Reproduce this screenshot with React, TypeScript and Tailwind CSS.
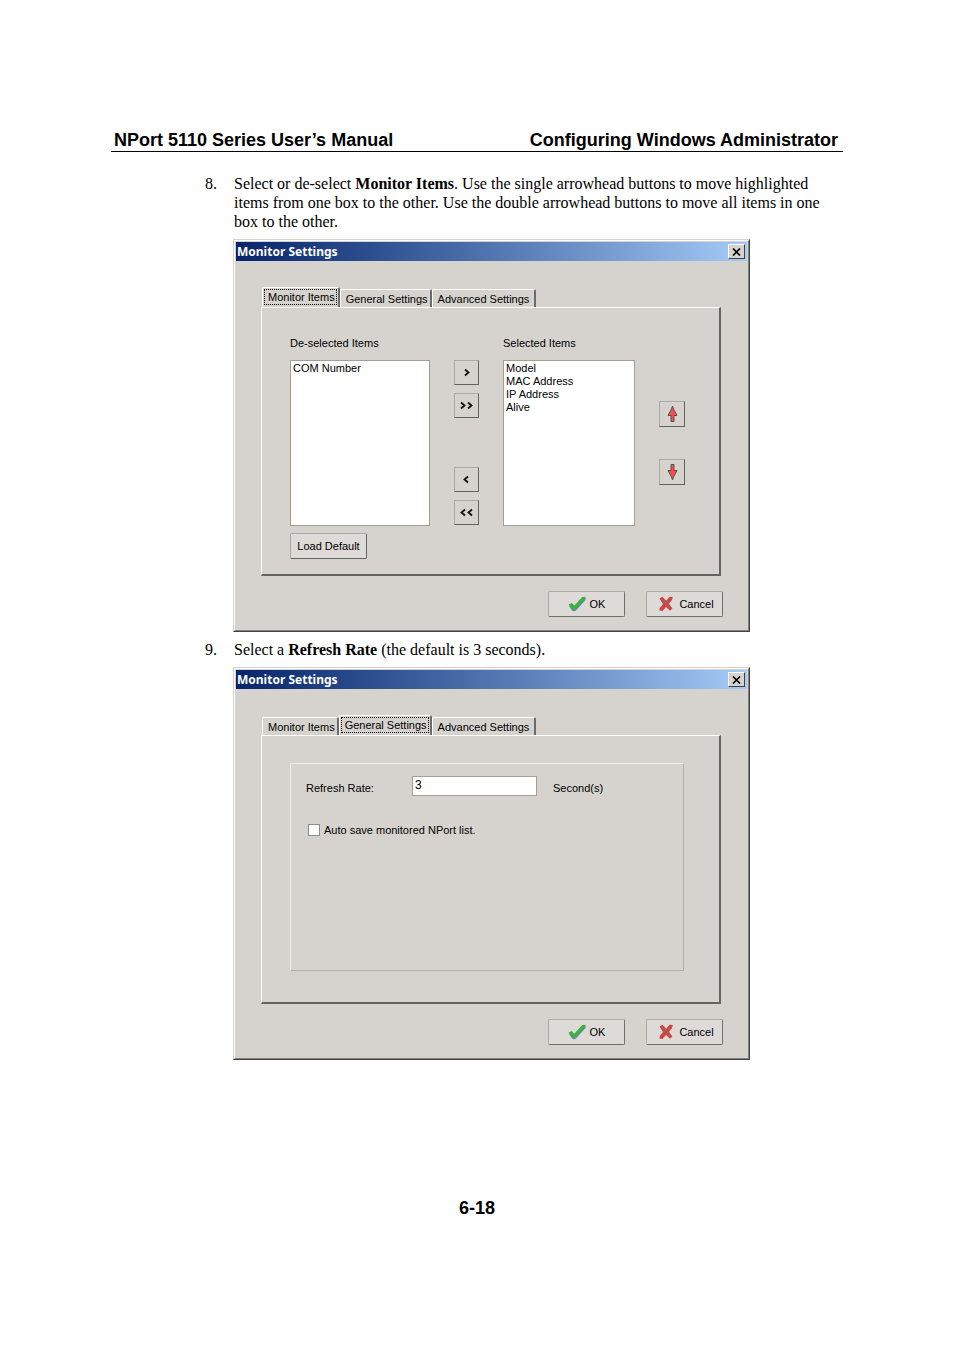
import React, { useState } from 'react';

type TabId = 'items' | 'general' | 'advanced';

const tabs: { id: TabId; title: string }[] = [
  { id: 'items', title: 'Monitor Items' },
  { id: 'general', title: 'General Settings' },
  { id: 'advanced', title: 'Advanced Settings' },
];

function CheckIcon() {
  return (
    <svg width="18" height="16" viewBox="0 0 18 16" aria-hidden="true">
      <path d="M1 10 L4 8.5 L7 11 L15 2 L17.8 1.2 L17.5 4 L8 14.5 L5.5 15.5 L4 14.5 Z" fill="#7484a8" />
      <path d="M0.5 8.5 L3.8 7 L6.3 9.8 L14.2 1 L17 0.8 L16.8 2.8 L6.8 13.8 L5 14 Z" fill="#35b53c" />
    </svg>
  );
}

function CrossIcon() {
  return (
    <svg width="14" height="16" viewBox="0 0 14 16" aria-hidden="true">
      <path
        d="M0.5 2.5 L3.5 0.8 L7.2 4.8 L10.5 0.8 L13.8 1 L13 4 L10 7.8 L13.4 12.5 L11 14.8 L7 11 L3.5 15 L0.4 14.5 L0.8 12 L4 8 Z"
        fill="#d84040"
      />
      <path d="M3.5 3.5 L11 12.5 M10.5 3.5 L7.5 7.5" fill="none" stroke="#a85a58" strokeWidth="2.2" />
    </svg>
  );
}

function ArrowIcon({ down = false }: { down?: boolean }) {
  return (
    <svg width="11" height="18" viewBox="0 0 11 18" aria-hidden="true" className={down ? 'rotate-180' : ''}>
      <path d="M5.5 1 L6.5 4 L10 10.5 L7 10.5 L7 16.5 L4 16.5 L4 10.5 L1 10.5 L4.5 4 Z" fill="#ff4a4a" stroke="#4f5652" strokeWidth="1" />
    </svg>
  );
}

// Small square buttons between the two lists
function MoveButton({ label, children }: { label: string; children: React.ReactNode }) {
  return (
    <button
      aria-label={label}
      className="w-[25px] h-[25px] flex items-center justify-center border border-t-[#a9aaa6] border-l-[#a9aaa6] border-b-[#5f645f] border-r-[#5f645f]"
    >
      {children}
    </button>
  );
}

function Chevrons({ count, left = false }: { count: number; left?: boolean }) {
  return (
    <svg width="15" height="9" viewBox="0 0 15 9" aria-hidden="true" className={left ? 'rotate-180' : ''}>
      {count === 2 && <path d="M2 1.5 L5.5 4.5 L2 7.5" fill="none" stroke="#111" strokeWidth="1.8" />}
      <path
        d={count === 2 ? 'M9 1.5 L12.5 4.5 L9 7.5' : 'M6 1.5 L9.5 4.5 L6 7.5'}
        fill="none"
        stroke="#111"
        strokeWidth="1.8"
      />
    </svg>
  );
}

function ItemList({ id, label, items, width }: { id: string; label: string; items: string[]; width: string }) {
  return (
    <div className={width}>
      <label htmlFor={id} className="block leading-4 whitespace-nowrap">{label}</label>
      <select
        id={id}
        multiple
        className="block w-full h-[166px] mt-[9px] pt-px px-px bg-white border border-[#a39f93] overflow-hidden outline-none appearance-none"
      >
        {items.map((item) => (
          <option key={item} className="h-[13px] min-h-0 p-0 px-px leading-[13px]">{item}</option>
        ))}
      </select>
    </div>
  );
}

function ItemsPane({ name }: { name: string }) {
  return (
    <div className="pl-7 pt-[27px]">
      <div className="flex items-start">
        <ItemList id={`${name}-deselected`} label="De-selected Items" items={['COM Number']} width="w-[140px]" />
        <div className="flex flex-col mt-[25px] ml-6">
          <MoveButton label="Select item"><Chevrons count={1} /></MoveButton>
          <div className="mt-2"><MoveButton label="Select all items"><Chevrons count={2} /></MoveButton></div>
          <div className="mt-[49px]"><MoveButton label="De-select item"><Chevrons count={1} left /></MoveButton></div>
          <div className="mt-2"><MoveButton label="De-select all items"><Chevrons count={2} left /></MoveButton></div>
        </div>
        <div className="ml-6">
          <ItemList
            id={`${name}-selected`}
            label="Selected Items"
            items={['Model', 'MAC Address', 'IP Address', 'Alive']}
            width="w-[132px]"
          />
        </div>
        <div className="flex flex-col gap-8 mt-[66px] ml-6">
          {[false, true].map((down) => (
            <button
              key={String(down)}
              aria-label={down ? 'Move down' : 'Move up'}
              className="w-[26px] h-[26px] flex items-center justify-center border border-t-[#a9aaa6] border-l-[#a9aaa6] border-b-[#5f645f] border-r-[#5f645f]"
            >
              <ArrowIcon down={down} />
            </button>
          ))}
        </div>
      </div>
      <button className="mt-[7px] w-[77px] h-[26px] rounded-xs bg-[#dedad7] border border-t-[#a9aaa6] border-l-[#a9aaa6] border-b-[#5f645f] border-r-[#5f645f]">
        Load Default
      </button>
    </div>
  );
}

function GeneralPane({ name }: { name: string }) {
  return (
    <div className="pl-7 pr-[35px] pt-[27px]">
      <div className="h-[208px] border border-t-[#ecebe8] border-l-[#ecebe8] border-b-[#b3b0aa] border-r-[#b3b0aa] pl-[15px] pt-3">
        <div className="flex items-start">
          <label htmlFor={`${name}-rate`} className="w-[106px] pt-1 leading-4">Refresh Rate:</label>
          <input
            id={`${name}-rate`}
            type="text"
            defaultValue="3"
            className="w-[125px] h-5 bg-white border border-[#a39f93] px-0.5 pb-0.5 outline-none text-[12px]"
          />
          <span className="ml-4 pt-1 leading-4">Second(s)</span>
        </div>
        <label className="flex items-center mt-[26px] ml-0.5 leading-4">
          <input type="checkbox" className="appearance-none w-3 h-3 mr-1 bg-white border border-[#8e8c88] checked:bg-[#555]" />
          Auto save monitored NPort list.
        </label>
      </div>
    </div>
  );
}

function MonitorSettings({ name, initialTab }: { name: string; initialTab: TabId }) {
  const [activeTab, setActiveTab] = useState<TabId>(initialTab);

  return (
    <div className="max-w-[517px] border border-t-[#d6d3ce] border-l-[#d6d3ce] border-b-[#404040] border-r-[#404040] text-[11px] text-black font-['Liberation_Sans',Arial,sans-serif]">
      <div className="bg-[#d6d3ce] border border-t-white border-l-white border-b-[#84827f] border-r-[#84827f] px-px pt-px pb-[13px]">
        {/* Title bar */}
        <div className="h-[19px] flex items-center justify-between pl-px pr-0.5 bg-linear-to-r from-[#08246b] to-[#a5cbf7]">
          <span className="text-white font-bold text-[12px] leading-4 font-['Noto_Sans','DejaVu_Sans',sans-serif]">Monitor Settings</span>
          <button
            aria-label="Close"
            className="w-[17px] h-[15px] flex items-center justify-center bg-[#d6d3ce] border border-t-white border-l-white border-b-[#404040] border-r-[#404040]"
          >
            <svg width="9" height="8" viewBox="0 0 9 8" aria-hidden="true">
              <path d="M1 0.5 L8 7.5 M8 0.5 L1 7.5" stroke="#000" strokeWidth="1.6" />
            </svg>
          </button>
        </div>

        {/* Tabs and the page below them */}
        <div className="mt-[26px] ml-[25px] mr-[26px]">
          <div role="tablist" className="flex items-end h-5 pl-px">
            {tabs.map((tab) => {
              const active = tab.id === activeTab;
              return (
                <button
                  key={tab.id}
                  role="tab"
                  aria-selected={active}
                  onClick={() => setActiveTab(tab.id)}
                  className={`rounded-t-xs border-t border-l border-t-white border-l-white border-r-2 border-r-[#6b6b6b] whitespace-nowrap ${
                    active ? 'h-5 p-px pb-0.5' : 'h-[18px] pl-[5px] pr-0.5 last:pr-[5px] leading-4'
                  }`}
                >
                  {active ? (
                    <span className="block h-4 pl-1 pr-0.5 leading-4 outline-1 -outline-offset-1 outline-dotted outline-black">{tab.title}</span>
                  ) : (
                    tab.title
                  )}
                </button>
              );
            })}
          </div>
          <div
            role="tabpanel"
            className="h-[269px] border border-t-white border-l-white border-b-2 border-r-2 border-b-[#636363] border-r-[#636363]"
          >
            {activeTab === 'items' && <ItemsPane name={name} />}
            {activeTab === 'general' && <GeneralPane name={name} />}
          </div>
        </div>

        <div className="flex justify-end gap-[21px] mt-[15px] mr-6">
          <button className="w-[77px] h-[26px] flex items-center justify-center gap-1 rounded-xs bg-[#dedad7] border border-t-[#a9aaa6] border-l-[#a9aaa6] border-b-[#6b706b] border-r-[#6b706b]">
            <CheckIcon />
            <span>OK</span>
          </button>
          <button className="w-[77px] h-[26px] flex items-center justify-center gap-1.5 pl-1 rounded-xs bg-[#dedad7] border border-t-[#a9aaa6] border-l-[#a9aaa6] border-b-[#6b706b] border-r-[#6b706b]">
            <CrossIcon />
            <span>Cancel</span>
          </button>
        </div>
      </div>
    </div>
  );
}

function Step({ number, text, children }: { number: number; text: React.ReactNode; children: React.ReactNode }) {
  return (
    <li className="flex">
      <span className="w-7 shrink-0">{number}.</span>
      <div className="flex-1">
        <p className="pl-px">{text}</p>
        <div className="mt-2">{children}</div>
      </div>
    </li>
  );
}

export default function App() {
  return (
    <div className="bg-white text-black px-[111px] pt-[130px] pb-[131px]">
      <header className="flex justify-between pl-[3px] pr-[5px] pb-px border-b border-black font-bold text-[18px] leading-5 font-['Liberation_Sans',Arial,sans-serif]">
        <span>NPort 5110 Series User’s Manual</span>
        <span>Configuring Windows Administrator</span>
      </header>

      <ol className="flex flex-col gap-2 mt-[22px] pl-[94px] text-[16px] leading-[19px] font-['Liberation_Serif','Times_New_Roman',serif]">
        <Step
          number={8}
          text={
            <>
              Select or de-select <b>Monitor Items</b>. Use the single arrowhead buttons to move highlighted items from
              one box to the other. Use the double arrowhead buttons to move all items in one box to the other.
            </>
          }
        >
          <MonitorSettings name="first" initialTab="items" />
        </Step>
        <Step
          number={9}
          text={
            <>
              Select a <b>Refresh Rate</b> (the default is 3 seconds).
            </>
          }
        >
          <MonitorSettings name="second" initialTab="general" />
        </Step>
      </ol>

      <footer className="mt-[138px] text-center font-bold text-[18px] leading-5 font-['Liberation_Sans',Arial,sans-serif]">
        6-18
      </footer>
    </div>
  );
}
